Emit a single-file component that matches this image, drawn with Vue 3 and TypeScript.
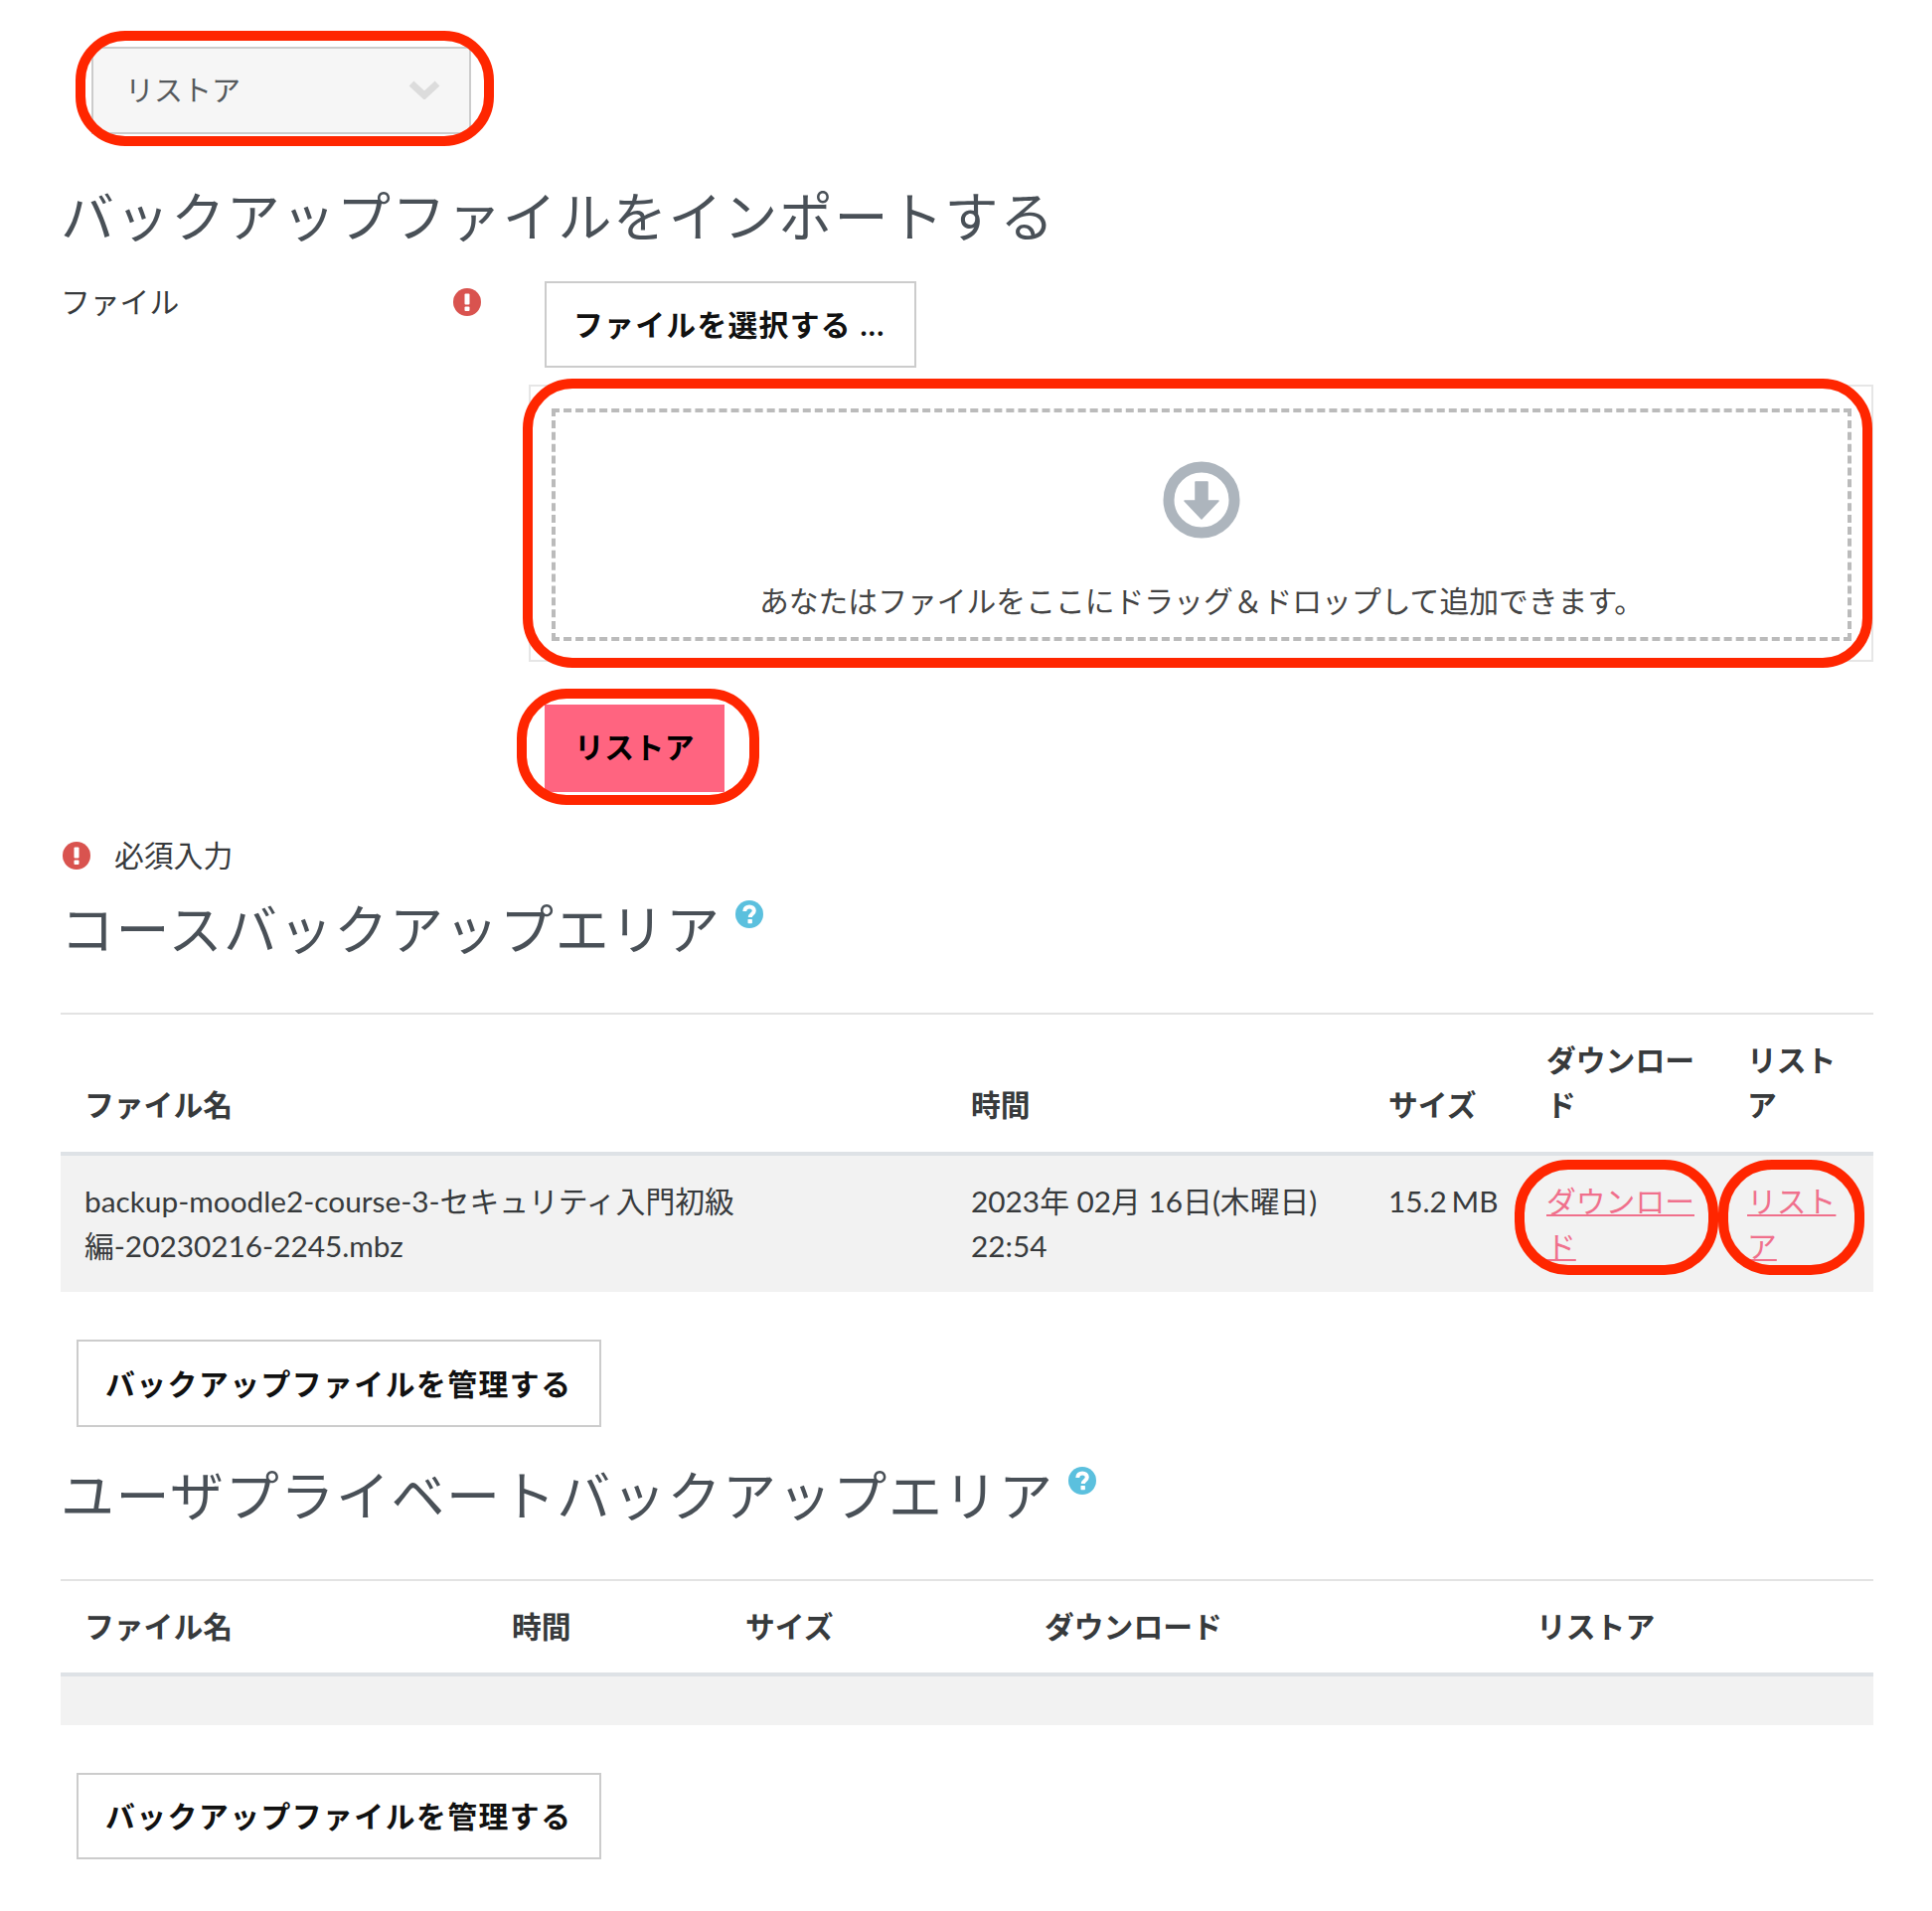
<script setup lang="ts">
const manageLabel = 'バックアップファイルを管理する'
</script>

<template>
  <div class="page">
    <div class="select">
      <span>リストア</span>
      <svg class="chevron" width="32" height="20" viewBox="0 0 32 20">
        <polyline points="3,4 16,16 29,4" fill="none" stroke="#dcdcdc" stroke-width="7" />
      </svg>
      <span class="mark mark-select" />
    </div>

    <h2 class="heading-import">バックアップファイルをインポートする</h2>

    <div class="form-row">
      <div class="form-label">
        <span>ファイル</span>
        <svg class="status-icon" viewBox="0 0 28 28">
          <circle cx="14" cy="14" r="14" fill="#d9534f" />
          <rect x="11.5" y="5.5" width="5" height="11" rx="1" fill="#fff" />
          <rect x="11.5" y="18.5" width="5" height="4.5" rx="1" fill="#fff" />
        </svg>
      </div>
      <div class="form-field">
        <button class="btn pick-btn">ファイルを選択する ...</button>
        <div class="file-box">
          <div class="drop-zone">
            <svg class="drop-icon" width="78" height="78" viewBox="0 0 78 78">
              <circle cx="39" cy="39" r="33" fill="none" stroke="#adb5bd" stroke-width="11" />
              <path d="M33 21h12v19h11L39 58 22 40h11z" fill="#adb5bd" stroke="#adb5bd" stroke-width="1.5" stroke-linejoin="round" />
            </svg>
            <p>あなたはファイルをここにドラッグ＆ドロップして追加できます。</p>
          </div>
          <span class="mark mark-box" />
        </div>
        <div class="submit-wrap">
          <button class="submit">リストア</button>
          <span class="mark mark-submit" />
        </div>
      </div>
    </div>

    <div class="required">
      <svg class="status-icon" viewBox="0 0 28 28">
        <circle cx="14" cy="14" r="14" fill="#d9534f" />
        <rect x="11.5" y="5.5" width="5" height="11" rx="1" fill="#fff" />
        <rect x="11.5" y="18.5" width="5" height="4.5" rx="1" fill="#fff" />
      </svg>
      <span>必須入力</span>
    </div>

    <h2 class="heading-course">
      コースバックアップエリア
      <svg class="help" viewBox="0 0 28 28">
        <circle cx="14" cy="14" r="14" fill="#5bc0de" />
        <path d="M9.3 11c0-3 2-4.6 4.8-4.6s4.7 1.6 4.7 4c0 3.4-4 3.2-4 6.6" fill="none" stroke="#fff" stroke-width="4" />
        <rect x="12.5" y="19" width="4.4" height="4.2" rx="0.6" fill="#fff" />
      </svg>
    </h2>

    <table class="course-table">
      <colgroup>
        <col class="c1-name"><col class="c1-time"><col class="c1-size"><col class="c1-dl"><col class="c1-rs">
      </colgroup>
      <thead>
        <tr>
          <th>ファイル名</th>
          <th>時間</th>
          <th>サイズ</th>
          <th>ダウンロード</th>
          <th>リストア</th>
        </tr>
      </thead>
      <tbody>
        <tr>
          <td>backup-moodle2-course-3-セキュリティ入門初級<br>編-20230216-2245.mbz</td>
          <td>2023年 02月 16日(木曜日) 22:54</td>
          <td class="nowrap">15.2 MB</td>
          <td class="marked">
            <a href="#">ダウンロード</a>
            <span class="mark mark-dl" />
          </td>
          <td class="marked">
            <a href="#">リストア</a>
            <span class="mark mark-rs" />
          </td>
        </tr>
      </tbody>
    </table>

    <button class="btn manage">{{ manageLabel }}</button>

    <h2 class="heading-user">
      ユーザプライベートバックアップエリア
      <svg class="help" viewBox="0 0 28 28">
        <circle cx="14" cy="14" r="14" fill="#5bc0de" />
        <path d="M9.3 11c0-3 2-4.6 4.8-4.6s4.7 1.6 4.7 4c0 3.4-4 3.2-4 6.6" fill="none" stroke="#fff" stroke-width="4" />
        <rect x="12.5" y="19" width="4.4" height="4.2" rx="0.6" fill="#fff" />
      </svg>
    </h2>

    <table class="user-table">
      <colgroup>
        <col class="c2-name"><col class="c2-time"><col class="c2-size"><col class="c2-dl"><col class="c2-rs">
      </colgroup>
      <thead>
        <tr>
          <th>ファイル名</th>
          <th>時間</th>
          <th>サイズ</th>
          <th>ダウンロード</th>
          <th>リストア</th>
        </tr>
      </thead>
      <tbody>
        <tr class="empty-row">
          <td colspan="5" />
        </tr>
      </tbody>
    </table>

    <button class="btn manage manage-last">{{ manageLabel }}</button>
  </div>
</template>

<style scoped>
.page {
  box-sizing: border-box;
  width: 1944px;
  min-height: 1923px;
  padding: 47px 59px 51px 61px;
  background: #fff;
  color: #373a3c;
  font-family: Lato, "Noto Sans CJK JP", sans-serif;
  font-size: 29.8px;
  line-height: 45px;
}

.mark {
  position: absolute;
  z-index: 2;
  box-sizing: border-box;
  border: 10px solid #ff2600;
  pointer-events: none;
}

.select {
  position: relative;
  box-sizing: border-box;
  display: flex;
  align-items: center;
  justify-content: space-between;
  width: 382px;
  height: 88px;
  margin-left: 31px;
  padding: 0 29px 2px 32px;
  background: #f6f6f6;
  border: 2px solid #ccc;
  color: #55595c;
  font-size: 29px;
}

.mark-select {
  left: -18px;
  top: -18px;
  width: 421px;
  height: 116px;
  border-radius: 50px;
}

h2 {
  display: flex;
  gap: 14px;
  margin: 0;
  color: #495057;
  font-size: 54px;
  font-weight: 400;
  line-height: 66px;
  letter-spacing: 1.6px;
  white-space: nowrap;
}

.heading-import {
  margin-top: 51px;
}

.form-row {
  display: grid;
  grid-template-columns: 471px 1fr;
  margin-top: 29px;
}

.form-label {
  display: flex;
  justify-content: space-between;
  align-items: center;
  align-self: start;
  width: 423px;
}

.status-icon {
  width: 28px;
  height: 28px;
  flex: none;
}

.btn {
  box-sizing: border-box;
  height: 87px;
  padding: 0 28px 0 27px;
  background: #fff;
  border: 2px solid #ccc;
  color: #111;
  font: inherit;
  font-weight: 700;
  letter-spacing: 1.3px;
  white-space: nowrap;
}

.pick-btn {
  display: block;
  margin: 2px 0 0 16px;
  padding-right: 29px;
}

.file-box {
  position: relative;
  box-sizing: border-box;
  height: 279px;
  margin-top: 17px;
  padding: 22px 20px 0 21px;
  border: 2px solid #e6e6e6;
}

.drop-zone {
  box-sizing: border-box;
  display: flex;
  flex-direction: column;
  align-items: center;
  height: 234px;
  padding-top: 49px;
  border: 4px dashed #bbb;
}

.drop-zone p {
  margin: 40px 0 0;
  color: #444;
}

.drop-icon {
  display: block;
}

.mark-box {
  left: -8px;
  top: -8px;
  right: -1px;
  bottom: -8px;
  border-radius: 50px;
}

.submit-wrap {
  position: relative;
  width: 181px;
  height: 88px;
  margin: 43px 0 0 16px;
}

.submit {
  width: 100%;
  height: 100%;
  padding: 0 0 3px;
  background: #ff6480;
  border: 0;
  color: #000;
  font: inherit;
  font-weight: 700;
  letter-spacing: 0.5px;
}

.mark-submit {
  left: -28px;
  top: -16px;
  width: 244px;
  height: 117px;
  border-radius: 50px;
}

.required {
  display: flex;
  align-items: center;
  gap: 24px;
  margin: 41px 0 0 2px;
}

.heading-course {
  margin-top: 20px;
}

.heading-user {
  margin-top: 37px;
}

.help {
  flex: none;
  width: 28px;
  height: 28px;
  margin-top: 3px;
}

table {
  width: 1824px;
  border-collapse: collapse;
  table-layout: fixed;
  border-top: 2px solid #e3e3e3;
}

.course-table {
  margin-top: 50px;
}

.user-table {
  margin-top: 50px;
}

th {
  padding: 23px 24px 25px;
  border-bottom: 4px solid #dee2e6;
  text-align: left;
  vertical-align: bottom;
  font-weight: 700;
}

.user-table th {
  padding-bottom: 24px;
}

td {
  padding: 23px 24px 24px;
  vertical-align: top;
  background: #f2f2f2;
}

.marked {
  position: relative;
}

.nowrap {
  white-space: nowrap;
  word-spacing: -3px;
}

a {
  color: #f0708c;
  text-decoration: underline;
}

.empty-row td {
  height: 49px;
  padding: 0;
}

.c1-name { width: 892px; }
.c1-time { width: 420px; }
.c1-size { width: 159px; }
.c1-dl { width: 202px; }
.c1-rs { width: 151px; }

.c2-name { width: 430px; }
.c2-time { width: 235px; }
.c2-size { width: 301px; }
.c2-dl { width: 495px; }
.c2-rs { width: 363px; }

.mark-dl {
  left: -8px;
  top: 4px;
  width: 205px;
  height: 116px;
  border-radius: 54px;
}

.mark-rs {
  left: -5px;
  top: 4px;
  width: 147px;
  height: 116px;
  border-radius: 54px;
}

.manage {
  display: block;
  height: 88px;
  margin: 48px 0 0 16px;
  letter-spacing: 1.5px;
}

.manage-last {
  height: 87px;
}
</style>
